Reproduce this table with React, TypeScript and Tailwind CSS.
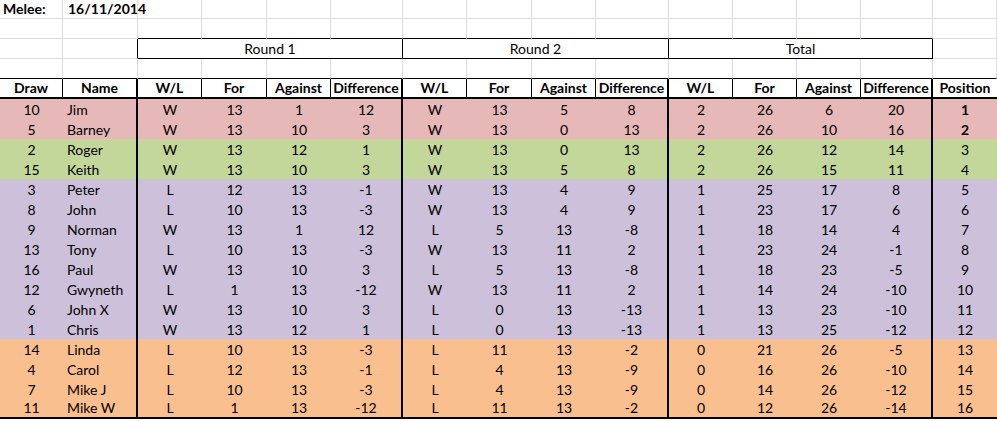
const headers = ['Draw', 'Name', 'W/L', 'For', 'Against', 'Difference', 'W/L', 'For', 'Against', 'Difference', 'W/L', 'For', 'Against', 'Difference', 'Position'];

// Draw, Name, then Round 1, Round 2, Total (W/L, For, Against, Difference), Position
const results: string[][] = [
  ['10', 'Jim', 'W', '13', '1', '12', 'W', '13', '5', '8', '2', '26', '6', '20', '1'],
  ['5', 'Barney', 'W', '13', '10', '3', 'W', '13', '0', '13', '2', '26', '10', '16', '2'],
  ['2', 'Roger', 'W', '13', '12', '1', 'W', '13', '0', '13', '2', '26', '12', '14', '3'],
  ['15', 'Keith', 'W', '13', '10', '3', 'W', '13', '5', '8', '2', '26', '15', '11', '4'],
  ['3', 'Peter', 'L', '12', '13', '-1', 'W', '13', '4', '9', '1', '25', '17', '8', '5'],
  ['8', 'John', 'L', '10', '13', '-3', 'W', '13', '4', '9', '1', '23', '17', '6', '6'],
  ['9', 'Norman', 'W', '13', '1', '12', 'L', '5', '13', '-8', '1', '18', '14', '4', '7'],
  ['13', 'Tony', 'L', '10', '13', '-3', 'W', '13', '11', '2', '1', '23', '24', '-1', '8'],
  ['16', 'Paul', 'W', '13', '10', '3', 'L', '5', '13', '-8', '1', '18', '23', '-5', '9'],
  ['12', 'Gwyneth', 'L', '1', '13', '-12', 'W', '13', '11', '2', '1', '14', '24', '-10', '10'],
  ['6', 'John X', 'W', '13', '10', '3', 'L', '0', '13', '-13', '1', '13', '23', '-10', '11'],
  ['1', 'Chris', 'W', '13', '12', '1', 'L', '0', '13', '-13', '1', '13', '25', '-12', '12'],
  ['14', 'Linda', 'L', '10', '13', '-3', 'L', '11', '13', '-2', '0', '21', '26', '-5', '13'],
  ['4', 'Carol', 'L', '12', '13', '-1', 'L', '4', '13', '-9', '0', '16', '26', '-10', '14'],
  ['7', 'Mike J', 'L', '10', '13', '-3', 'L', '4', '13', '-9', '0', '14', '26', '-12', '15'],
  ['11', 'Mike W', 'L', '1', '13', '-12', 'L', '11', '13', '-2', '0', '12', '26', '-14', '16'],
];

// fill per finishing band
const bandFill = (i: number) => {
  if (i < 2) return 'bg-[#e6b8b7]';
  if (i < 4) return 'bg-[#c4d79b]';
  if (i < 12) return 'bg-[#ccc0da]';
  return 'bg-[#fabf8f]';
};

// columns that close a block (Name, Round 1, Round 2, Total)
const thick = [1, 5, 9, 13];

const cell = 'flex items-end pb-[2px] leading-none whitespace-nowrap';

export default function App() {
  return (
    <div
      className="w-[997px] h-[421px] overflow-hidden bg-white text-[14px] text-black"
      style={{ fontFamily: 'Lato, "Liberation Sans", sans-serif' }}
    >
      <div className="grid grid-cols-[63px_75px_64px_65px_64px_72px_64px_65px_64px_73px_64px_64px_64px_72px_64px] grid-rows-[19px_20px_20px_20px_20px_repeat(16,20px)]">
        {/* row 1 */}
        {headers.map((_, c) => (
          <div key={`r1-${c}`} className={`${cell} border-r border-b border-[#dadcdd] ${c === 0 ? 'pl-[3px] font-bold' : ''} ${c === 1 ? 'pl-[5px] font-bold' : ''}`}>
            {c === 0 ? 'Melee:' : c === 1 ? '16/11/2014' : ''}
          </div>
        ))}

        {/* row 2 - bottom edge doubles as the top of the round boxes */}
        {headers.map((_, c) => (
          <div
            key={`r2-${c}`}
            className={
              c >= 2 && c <= 13
                ? 'border-r border-r-[#dadcdd] border-b border-b-black'
                : 'border-r border-b border-[#dadcdd]'
            }
          />
        ))}

        {/* row 3 - round boxes */}
        <div className="border-r border-b border-[#dadcdd]" />
        <div className="border-r border-r-black border-b border-b-[#dadcdd]" />
        <div className={`${cell} col-span-4 justify-center border-r border-b border-black`}>Round 1</div>
        <div className={`${cell} col-span-4 justify-center border-r border-b border-black`}>Round 2</div>
        <div className={`${cell} col-span-4 justify-center border-r border-b border-black`}>Total</div>
        <div className="border-r border-b border-[#dadcdd]" />

        {/* row 4 */}
        {headers.map((_, c) => (
          <div key={`r4-${c}`} className="border-r border-r-[#dadcdd] border-b border-b-black" />
        ))}

        {/* header */}
        {headers.map((h, c) => (
          <div
            key={`h-${c}`}
            className={`${cell} justify-center font-bold border-b-2 border-black ${thick.includes(c) ? 'border-r-2' : c === 14 ? '' : 'border-r'}`}
          >
            {h}
          </div>
        ))}

        {/* results */}
        {results.map((row, i) =>
          row.map((v, c) => (
            <div
              key={`d-${i}-${c}`}
              className={`${cell} ${bandFill(i)} ${c === 1 ? 'justify-start pl-[4px]' : 'justify-center'} ${thick.includes(c) ? 'border-r-2 border-r-black' : ''} ${i === results.length - 1 ? 'border-b-2 border-b-black' : ''} ${c === 14 && i < 2 ? 'font-bold' : ''}`}
            >
              {v}
            </div>
          ))
        )}
      </div>
    </div>
  );
}
